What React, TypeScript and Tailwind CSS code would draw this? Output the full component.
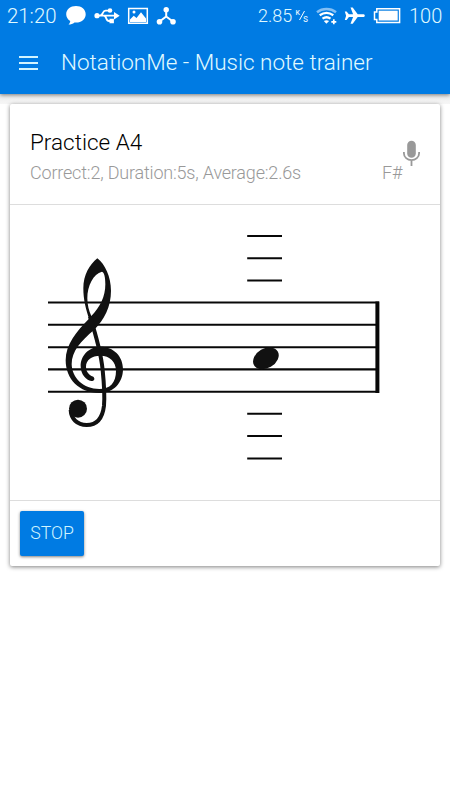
const ledgers = [236, 258.3, 280.5, 413.7, 436, 458.5];
const staff = [302.5, 324.8, 347.2, 369.4, 391.8];

function StatusLeft() {
  return (
    <svg className="ml-[8px] h-[32px] w-[116px] shrink-0" viewBox="64 0 116 32" fill="none" stroke="#fff">
      <path d="M76 6c5.600 0 9.700 3.500 9.700 8.300s-4.100 8.300-9.700 8.300l-1.500-.1c-1.700 1.400-3.600 2-6 2 1.200-1 1.700-2.200 1.700-3.500-2.500-1.500-4-3.900-4-6.700C66.200 9.500 70.400 6 76 6z" fill="#fff" stroke="none" />
      <path d="M96 15.700h19M99.500 15.700c4 0 2.500-5 6-5h4M103.500 15.700c3.500 0 2 5.300 5.500 5.300h2" strokeWidth="1.800" />
      <circle cx="97" cy="15.700" r="2.600" fill="#fff" stroke="none" />
      <circle cx="110" cy="10.500" r="2.300" fill="#fff" stroke="none" />
      <path d="M109.500 18.800h4.400v4.400h-4.400zM114 12l5.700 3.700-5.700 3.700z" fill="#fff" stroke="none" />
      <path d="M128.700 8.500h18.600v14.800h-18.600z" strokeWidth="1.500" />
      <path d="M130 22v-2.500l3.700-3.700 2.800 2.200 4.500-5.800 5 6.300V22z" fill="#fff" stroke="none" />
      <circle cx="134" cy="12" r="1.500" fill="#fff" stroke="none" />
      <path d="M166.200 10v6.500l-7 5.200M166.200 16.500l7 5.200" strokeWidth="2" />
      <g fill="#fff" stroke="none"><circle cx="166.200" cy="9.700" r="2.700" /><circle cx="159.500" cy="21.800" r="2.800" /><circle cx="173" cy="21.800" r="2.800" /></g>
    </svg>
  );
}

function StatusRight() {
  return (
    <svg className="h-[32px] w-[114px] shrink-0" viewBox="294 0 114 32" fill="none" stroke="#fff">
      <g fill="#e0f2ff" stroke="none" fontFamily="Roboto, sans-serif" fontWeight="500">
        <text x="295.500" y="14.500" fontSize="7">K</text><text x="303" y="21.700" fontSize="10" fontWeight="400">s</text>
      </g>
      <path d="M299.500 20l5-9" strokeWidth="1" />
      <path d="M317 12.200c5.500-4.300 13.500-4.300 19 0" stroke="#83bff4" strokeWidth="2.500" />
      <path d="M319.700 15.300c4.200-3 9.500-3 13.600 0M322.500 18.600c2.700-1.700 5.500-1.700 8 0" strokeWidth="2.300" />
      <path d="M323.800 21c1.700-1.100 3.700-1.100 5.300 0l-2.700 2.800z" fill="#fff" stroke="none" />
      <path d="M333.800 19.300v5M331.300 21.800h5" strokeWidth="1.700" />
      <path d="M364.800 15.700c0-.9-.8-1.400-2-1.400h-5.100l-5-6.700h-2.200l2.600 6.700h-4.200l-2.300-2.900h-1.800l1.300 4.300-1.300 4.300h1.800l2.300-2.900h4.200l-2.600 6.700h2.200l5-6.700h5.100c1.200 0 2-.5 2-1.400z" fill="#fff" stroke="none" />
      <path d="M376.800 8.700h22.800v13.800h-22.800v-3h-2.300v-7.500h2.300z" strokeWidth="1.500" />
      <path d="M378.700 10.700h19v9.800h-19z" fill="#fff" stroke="none" />
    </svg>
  );
}

function Clef() {
  return (
    <g transform="translate(40 250) scale(.3333)" fill="#111">
      <path fillRule="evenodd" d="M172 25C149 44 130 75 130 115C130 150 138 178 147 206C110 244 77 282 77 331C77 388 118 429 178 429C221 429 249 398 249 357C249 318 220 290 182 290C146 290 122 317 122 348C122 373 138 390 154 393C163 393 166 386 160 380C144 374 138 363 138 350C138 330 155 317 181 317C210 317 228 335 228 363C228 398 210 417 178 417C130 417 96 384 95 343C95 303 123 273 162 240C193 209 213 170 213 122C213 80 195 43 172 25ZM186 65C160 72 142 107 142 145C142 165 147 183 154 198C181 170 196 140 196 103C196 82 193 67 186 65Z" />
      <path d="M150 200C166 250 183 310 188 360C193 410 194 445 192 467C187 509 169 525 140 525C111 525 93 506 92 480" fill="none" stroke="#111" strokeWidth="12" />
      <circle cx="114" cy="476" r="27" />
    </g>
  );
}

export default function App() {
  return (
    <div className="flex h-[800px] w-[450px] flex-col overflow-hidden bg-white font-['Roboto',sans-serif] font-light">
      <header className="z-10 h-[94px] shrink-0 bg-[#007be3] text-[#e0faff] shadow-[0_1px_4px_rgba(0,0,0,.5)]">
        <div className="flex h-[32px] items-center">
          <span className="ml-[7px] w-[49px] text-[20.400px] leading-[32px] whitespace-nowrap">21:20</span>
          <StatusLeft />
          <span className="ml-[78px] w-[36px] text-[18px] leading-[32px] whitespace-nowrap">2.85</span>
          <StatusRight />
          <span className="ml-[1px] text-[20px] leading-[32px]">100</span>
        </div>
        <div className="flex h-[62px] items-center">
          <div className="ml-[19px] flex w-[19px] flex-col gap-[4px]">
            <i className="h-[2px] bg-[#d0f4ff]" /><i className="h-[2px] bg-[#d0f4ff]" /><i className="h-[2px] bg-[#d0f4ff]" />
          </div>
          <h1 className="ml-[23px] pb-[2px] text-[22.500px] leading-[60px] whitespace-nowrap">NotationMe - Music note trainer</h1>
        </div>
      </header>
      <div className="h-[10px] shrink-0 bg-gradient-to-b from-[#eee] to-[#f6f6f6]" />
      <main className="mx-[10px] flex h-[462px] shrink-0 flex-col rounded-[2px] bg-white shadow-[0_1px_4px_rgba(0,0,0,.5)]">
        <section className="flex h-[101px] shrink-0 border-b border-[#ddd] pl-[20px]">
          <div className="w-[352px] pt-[24px]">
            <h2 className="text-[22.500px] leading-[28px] text-black">Practice A4</h2>
            <p className="text-[18px] leading-[33px] tracking-[-0.190px] text-[#999]">Correct:2, Duration:5s, Average:2.6s</p>
          </div>
          <span className="w-[21px] pt-[52px] text-[18px] leading-[33px] tracking-[-0.200px] text-[#999]">F#</span>
          <svg className="mt-[36px] h-[28px] w-[18px]" viewBox="403 140 18 28" fill="none" stroke="#999" strokeWidth="1.800">
            <rect x="407.200" y="140.800" width="8.600" height="17" rx="4.300" fill="#999" stroke="none" />
            <path d="M403.900 152v1.200c0 4 3.400 7 7.600 7s7.600-3 7.600-7V152M411.500 160v6" />
          </svg>
        </section>
        <svg className="h-[295px] w-[430px] shrink-0" viewBox="10 205 430 295">
          <g stroke="#080808" strokeWidth="2.100">
            {staff.map(y => <path key={y} d={`M48 ${y}H379`} />)}
            {ledgers.map(y => <path key={y} d={`M247.200 ${y}H282`} />)}
          </g>
          <path d="M377.400 301.500v91.500" stroke="#080808" strokeWidth="4" />
          <ellipse cx="265.900" cy="358.300" rx="13.700" ry="9.800" transform="rotate(-30 265.900 358.300)" fill="#111" />
          <Clef />
        </svg>
        <footer className="h-[66px] border-t border-[#ddd] pt-[10px] pl-[10px]">
          <button className="h-[45px] w-[64px] rounded-[2px] bg-[#007be3] text-[17.700px] text-[#d0f4ff] shadow-[0_1px_3px_rgba(0,0,0,.5)]">STOP</button>
        </footer>
      </main>
    </div>
  );
}
